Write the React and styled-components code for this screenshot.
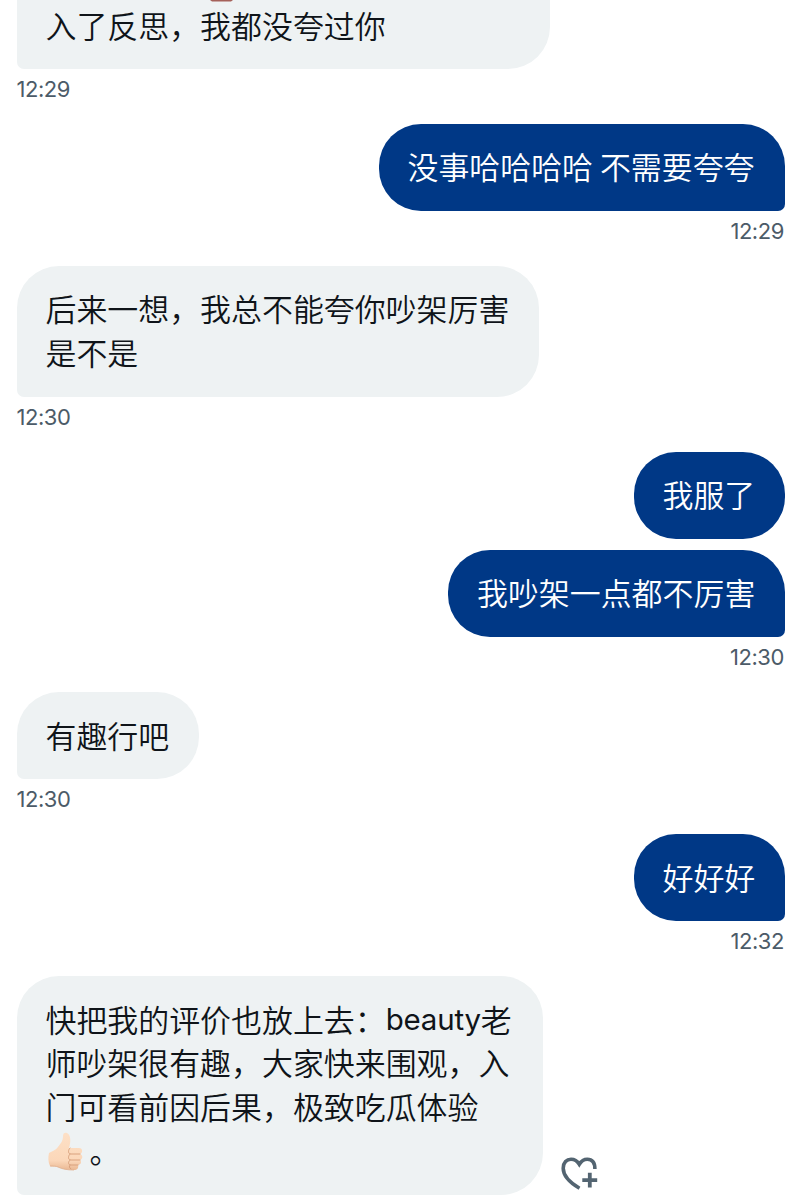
import React from "react";
import styled, { createGlobalStyle } from "styled-components";

const GlobalStyle = createGlobalStyle`
  * {
    box-sizing: border-box;
  }
  body {
    margin: 0;
    background: #ffffff;
    overflow: hidden;
  }
`;

const Chat = styled.main`
  width: 801px;
  height: 1200px;
  padding: 0 16.5px;
  display: flex;
  flex-direction: column;
  overflow: hidden;
  font-family: "Inter", "Noto Sans CJK SC", sans-serif;
`;

const Group = styled.section`
  flex: none;
  display: flex;
  flex-direction: column;
  align-items: ${(p) => (p.$mine ? "flex-end" : "flex-start")};
`;

const Line = styled.div`
  display: flex;
  align-items: flex-end;
  gap: 17px;
`;

const Bubble = styled.div`
  width: ${(p) => p.$width}px;
  margin-bottom: ${(p) => (p.$tail ? 0 : 11)}px;
  padding: ${(p) => (p.$cut ? "0 29px 23px" : "20.4px 0 23.1px 29px")};
  border-radius: ${(p) => {
    if (p.$cut) return "0 0 42px 7px";
    if (!p.$tail) return "42px";
    return p.$mine ? "42px 42px 7px 42px" : "42px 42px 42px 7px";
  }};
  background: ${(p) => (p.$mine ? "#003886" : "#eef2f3")};
  color: ${(p) => (p.$mine ? "#ffffff" : "#0f1419")};
  font-family: "Noto Sans CJK SC", sans-serif;
  font-size: 30.93px;
  font-weight: 350;
  line-height: 43.75px;
  white-space: nowrap;
`;

const Row = styled.div`
  height: 43.75px;
  display: flex;
  align-items: center;
`;

const Latin = styled.span`
  padding-top: 3px;
  font-family: "Inter", sans-serif;
  font-size: 29.5px;
  font-weight: 400;
  letter-spacing: -0.2px;
`;

const Time = styled.time`
  height: 54.8px;
  padding: 7px 0.6px 0 0;
  color: #4c5b68;
  font-family: "Inter", sans-serif;
  font-size: 22px;
  letter-spacing: -0.45px;
  line-height: 26px;
`;

// only the bottom edge of the emoji row is scrolled into view
const ScrolledRow = styled.div`
  height: 2.5px;
  padding-left: 164px;
`;

const EmojiEdge = styled.svg`
  display: block;
`;

const Thumb = styled.svg`
  flex: none;
  margin: 3px 7px 0 2px;
`;

const ReactButton = styled.button`
  flex: none;
  width: 40px;
  height: 40px;
  padding: 0;
  border: 0;
  background: none;
`;

const groups = [
  {
    time: "12:29",
    mine: true,
    bubbles: [{ width: 406, lines: ["没事哈哈哈哈 不需要夸夸"] }],
  },
  {
    time: "12:30",
    bubbles: [
      { width: 522, lines: ["后来一想，我总不能夸你吵架厉害", "是不是"] },
    ],
  },
  {
    time: "12:30",
    mine: true,
    bubbles: [
      { width: 151, lines: ["我服了"] },
      { width: 336.5, lines: ["我吵架一点都不厉害"] },
    ],
  },
  {
    time: "12:30",
    bubbles: [{ width: 182, lines: ["有趣行吧"] }],
  },
  {
    time: "12:32",
    mine: true,
    bubbles: [{ width: 151, lines: ["好好好"] }],
  },
];

const ThumbsUp = () => (
  <Thumb width="35" height="39" viewBox="0 0 35 39">
    <defs>
      <linearGradient id="skin" x1="0" y1="0" x2="0" y2="1">
        <stop offset="0" stopColor="#fde0c6" />
        <stop offset="0.75" stopColor="#fbd7b9" />
        <stop offset="1" stopColor="#eab893" />
      </linearGradient>
    </defs>
    <path
      d="M1 21C4 19 8 18 10 15C13 11 15 9 15 4C15 1 17 0 19 1C23 3 23 10 21 16H31C35 16 35 21 32 22C35 23 35 27 32 28C34 29 33 33 30 33C31 36 29 38 26 38C19 38 14 37 10 35C7 34 4 35 2 34C0 30 0 25 1 21Z"
      fill="url(#skin)"
    />
    <path
      d="M32 22H22C20 21 20 18 22 16M32 28H22C20 27 20 24 22 22M30 33H22C20 32 20 30 22 28M22 33C21 34 21 36 23 37"
      fill="none"
      stroke="#d9a27e"
      strokeWidth="1"
      strokeLinecap="round"
    />
    <path
      d="M2 34C5 34 8 34 10 35C14 37 19 38 26 38"
      fill="none"
      stroke="#dfad8b"
      strokeWidth="0.8"
    />
  </Thumb>
);

const HeartPlus = () => (
  <svg width="40" height="40" viewBox="0 0 40 40">
    <path
      d="M19.5 33.3C10.5 28 3.2 20.5 3.2 13.3C3.2 7.5 6.8 4.2 11 4.2C14.7 4.2 17.5 6.3 19.3 9.3C21.1 6.3 23.7 4.2 27.3 4.2C32 4.2 34.9 7.5 34.9 14"
      fill="none"
      stroke="#536471"
      strokeWidth="3.6"
    />
    <path
      d="M29.8 17.8V32.6M22.3 25.2H37.2"
      fill="none"
      stroke="#536471"
      strokeWidth="3.8"
    />
  </svg>
);

const Message = ({ group }) => (
  <Group $mine={group.mine}>
    {group.bubbles.map((b, i) => (
      <Bubble
        key={i}
        $mine={group.mine}
        $width={b.width}
        $tail={i === group.bubbles.length - 1}
      >
        {b.lines.map((text) => (
          <Row key={text}>{text}</Row>
        ))}
      </Bubble>
    ))}
    <Time>{group.time}</Time>
  </Group>
);

const App = () => {
  return (
    <Chat>
      <GlobalStyle />
      <Group>
        <Bubble $cut $tail $width={533}>
          <ScrolledRow>
            <EmojiEdge width="23" height="2" viewBox="0 0 23 2">
              <path d="M0 0H23L21 1.4H2Z" fill="#a5615a" />
            </EmojiEdge>
          </ScrolledRow>
          <Row>入了反思，我都没夸过你</Row>
        </Bubble>
        <Time>12:29</Time>
      </Group>
      {groups.map((group, i) => (
        <Message key={i} group={group} />
      ))}
      <Group>
        <Line>
          <Bubble $tail $width={526}>
            <Row>
              快把我的评价也放上去：<Latin>beauty</Latin>老
            </Row>
            <Row>师吵架很有趣，大家快来围观，入</Row>
            <Row>门可看前因后果，极致吃瓜体验</Row>
            <Row>
              <ThumbsUp />。
            </Row>
          </Bubble>
          <ReactButton aria-label="React">
            <HeartPlus />
          </ReactButton>
        </Line>
      </Group>
    </Chat>
  );
};

export default App;
